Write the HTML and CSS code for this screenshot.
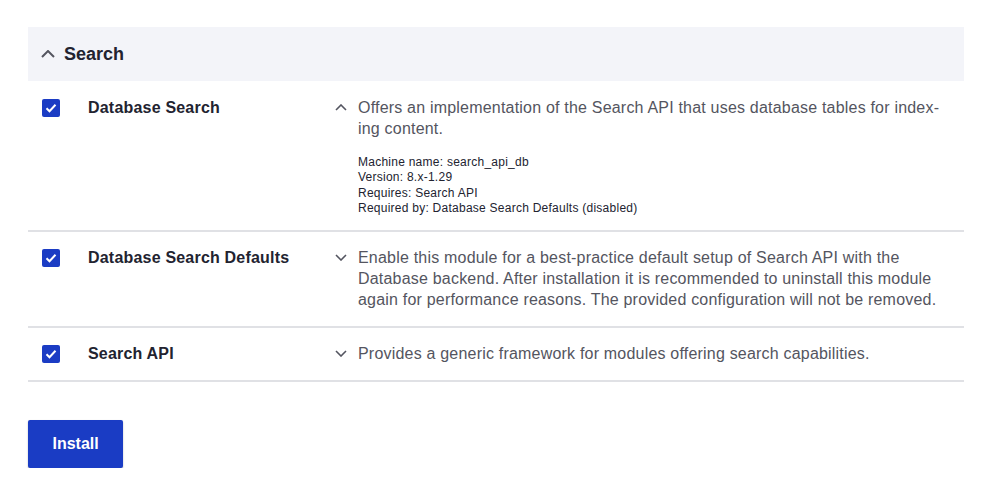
FILE: index.html
```html
<!DOCTYPE html>
<html lang="en">
<head>
  <meta charset="UTF-8">
  <meta name="viewport" content="width=device-width, initial-scale=1.0">
  <title>Extend</title>
  <link rel="stylesheet" href="styles.css">
</head>
<body>
  <form class="module-form">
    <section class="package">
      <div class="package-header">
        <svg class="chevron" width="14" height="8" viewBox="0 0 14 8"><path d="M1 7l6-6 6 6" fill="none" stroke="#545560" stroke-width="2"/></svg>
        <span>Search</span>
      </div>

      <div class="module module-first">
        <span class="checkbox"><svg width="12" height="10" viewBox="0 0 12 10"><path d="M1.5 5.2l3 3 6-6.4" fill="none" stroke="#fff" stroke-width="2"/></svg></span>
        <div class="module-name">Database Search</div>
        <div class="module-desc">
          <svg class="chevron" width="12" height="7" viewBox="0 0 12 7"><path d="M1 6l5-5 5 5" fill="none" stroke="#545560" stroke-width="1.6"/></svg>
          <div>
            <p>Offers an implementation of the Search API that uses database tables for index&shy;ing content.</p>
            <div class="details">
              Machine name: search_api_db<br>
              Version: 8.x-1.29<br>
              Requires: Search API<br>
              Required by: Database Search Defaults (disabled)
            </div>
          </div>
        </div>
      </div>

      <div class="module">
        <span class="checkbox"><svg width="12" height="10" viewBox="0 0 12 10"><path d="M1.5 5.2l3 3 6-6.4" fill="none" stroke="#fff" stroke-width="2"/></svg></span>
        <div class="module-name">Database Search Defaults</div>
        <div class="module-desc">
          <svg class="chevron" width="12" height="7" viewBox="0 0 12 7"><path d="M1 1l5 5 5-5" fill="none" stroke="#545560" stroke-width="1.6"/></svg>
          <p>Enable this module for a best-practice default setup of Search API with the Database backend. After installation it is recommended to uninstall this module again for performance reasons. The provided configuration will not be removed.</p>
        </div>
      </div>

      <div class="module">
        <span class="checkbox"><svg width="12" height="10" viewBox="0 0 12 10"><path d="M1.5 5.2l3 3 6-6.4" fill="none" stroke="#fff" stroke-width="2"/></svg></span>
        <div class="module-name">Search API</div>
        <div class="module-desc">
          <svg class="chevron" width="12" height="7" viewBox="0 0 12 7"><path d="M1 1l5 5 5-5" fill="none" stroke="#545560" stroke-width="1.6"/></svg>
          <p>Provides a generic framework for modules offering search capabilities.</p>
        </div>
      </div>
    </section>

    <button type="button" class="button-primary">Install</button>
  </form>
</body>
</html>
```

FILE: styles.css
```css
body { margin: 0; padding: 27px 36px 0 28px; font-family: "Liberation Sans", Arial, sans-serif; color: #222330; background: #fff; }
p { margin: 0; }
.package-header { height: 54px; background: #f3f4f9; display: flex; align-items: center; gap: 9px; padding-left: 13px; font-size: 18px; font-weight: bold; }
.module { display: grid; grid-template-columns: 60px 247px 1fr; padding: 15px 0 16px; border-bottom: 2px solid #e0e1e5; font-size: 16px; line-height: 21px; }
.module-first { padding: 16px 0 13px; }
.checkbox { width: 18px; height: 18px; margin: 2px 0 0 14px; background: #1b3cc4; border-radius: 2px; display: flex; align-items: center; justify-content: center; }
.module-name { font-weight: bold; letter-spacing: 0.2px; }
.module-desc { display: flex; gap: 11px; color: #545560; padding-right: 14px; letter-spacing: 0.2px; }
.module-desc .chevron { flex: none; margin-top: 7px; }
.details { margin-top: 16px; font-size: 12px; line-height: 15.4px; color: #222330; letter-spacing: 0.25px; }
.button-primary { margin-top: 38px; height: 48px; padding: 0 24.5px; background: #1a3cc4; color: #fff; border: none; border-radius: 2px; font-family: inherit; font-size: 16px; font-weight: bold; box-shadow: 0 1px 2px rgba(0,0,0,0.25); }
```
